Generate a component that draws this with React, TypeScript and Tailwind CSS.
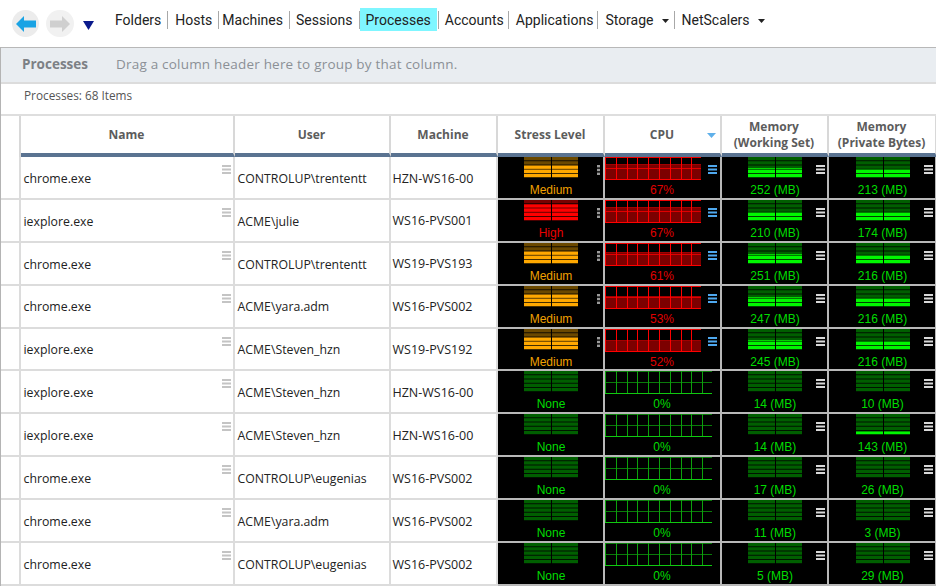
import React from 'react';

const NAV = [
  { label: 'Folders', cls: 'pl-[6px] pr-[6px]' },
  { label: 'Hosts', cls: 'pl-[7px] pr-[6px]' },
  { label: 'Machines', cls: 'pl-[3px] pr-[6px]' },
  { label: 'Sessions', cls: 'pl-[6px] pr-[6px]' },
  { label: 'Processes', active: true },
  { label: 'Accounts', cls: 'pl-[6px] pr-[4px]' },
  { label: 'Applications', cls: 'pl-[7px] pr-[4px]' },
  { label: 'Storage', caret: true, cls: 'pl-[7px] pr-[5px]' },
  { label: 'NetScalers', caret: true, cls: 'pl-[7px] pr-[6px]', last: true },
];

type Row = {
  name: string;
  user: string;
  machine: string;
  stress: 'Medium' | 'High' | 'None';
  cpu: number;
  ws: number;
  pb: number;
};

const ROWS: Row[] = [
  { name: 'chrome.exe', user: 'CONTROLUP\\trententt', machine: 'HZN-WS16-00', stress: 'Medium', cpu: 67, ws: 252, pb: 213 },
  { name: 'iexplore.exe', user: 'ACME\\julie', machine: 'WS16-PVS001', stress: 'High', cpu: 67, ws: 210, pb: 174 },
  { name: 'chrome.exe', user: 'CONTROLUP\\trententt', machine: 'WS19-PVS193', stress: 'Medium', cpu: 61, ws: 251, pb: 216 },
  { name: 'chrome.exe', user: 'ACME\\yara.adm', machine: 'WS16-PVS002', stress: 'Medium', cpu: 53, ws: 247, pb: 216 },
  { name: 'iexplore.exe', user: 'ACME\\Steven_hzn', machine: 'WS19-PVS192', stress: 'Medium', cpu: 52, ws: 245, pb: 216 },
  { name: 'iexplore.exe', user: 'ACME\\Steven_hzn', machine: 'HZN-WS16-00', stress: 'None', cpu: 0, ws: 14, pb: 10 },
  { name: 'iexplore.exe', user: 'ACME\\Steven_hzn', machine: 'HZN-WS16-00', stress: 'None', cpu: 0, ws: 14, pb: 143 },
  { name: 'chrome.exe', user: 'CONTROLUP\\eugenias', machine: 'WS16-PVS002', stress: 'None', cpu: 0, ws: 17, pb: 26 },
  { name: 'chrome.exe', user: 'ACME\\yara.adm', machine: 'WS16-PVS002', stress: 'None', cpu: 0, ws: 11, pb: 3 },
  { name: 'chrome.exe', user: 'CONTROLUP\\eugenias', machine: 'WS16-PVS002', stress: 'None', cpu: 0, ws: 5, pb: 29 },
];

const GRID = 'grid grid-cols-[20px_214px_156px_107px_107px_117px_107px_108px]';
const METER_TEXT = "text-[12px] leading-[14px] font-['Liberation_Sans',sans-serif]";

// five stacked bars split in two, lit from the bottom
function Meter({ lit, on, off }: { lit: number; on: string; off: string }) {
  const bars = [0, 1, 2, 3, 4];
  return (
    <svg width="54" height="21" className="block">
      {bars.map((i) => {
        const y = i * 4.2;
        const litTop = 21 - lit;
        const litH = Math.max(0, y + 3.4 - Math.max(y, litTop));
        return (
          <g key={i}>
            <rect x="0" y={y} width="54" height="3.4" fill={off} />
            {litH > 0 && <rect x="0" y={y + 3.4 - litH} width="54" height={litH} fill={on} />}
          </g>
        );
      })}
      <rect x="27" y="0" width="1" height="21" fill="#000" />
    </svg>
  );
}

function CpuGraph({ pct }: { pct: number }) {
  const hot = pct > 0;
  const width = hot ? 96 : 107;
  const line = hot ? '#ff0000' : '#0ca00c';
  const mid = hot ? '#e00000' : '#0a7a0a';
  const base = hot ? '#ff0000' : '#10c810';
  const fillH = Math.round((pct * 22) / 100);
  const cols = [0, 1, 2, 3, 4, 5, 6, 7, 8, 9];
  return (
    <svg width={width} height="23" className="block" shapeRendering="crispEdges">
      {hot && <rect x="0" y={22 - fillH} width={width} height={fillH} fill="#7c0000" />}
      <rect x="0" y="0" width={width} height="1" fill={hot ? '#f00000' : '#0a7a0a'} />
      <rect x="0" y="11" width={width} height="1" fill={mid} />
      {hot && <rect x="0" y={22 - fillH} width={width} height="1" fill="#a00000" />}
      {cols.map((i) =>
        i * 10.8 < width ? <rect key={i} x={Math.round(i * 10.8)} y="0" width="1" height="22" fill={line} /> : null,
      )}
      <rect x="0" y="22" width={width} height="1" fill={base} />
    </svg>
  );
}

function LinesIcon({ color, className }: { color: string; className: string }) {
  return (
    <svg width="9" height="9" className={className}>
      <rect x="0" y="0" width="9" height="2" fill={color} />
      <rect x="0" y="3.500" width="9" height="2" fill={color} />
      <rect x="0" y="7" width="9" height="2" fill={color} />
    </svg>
  );
}

function Dots() {
  return (
    <svg width="3" height="10" className="absolute top-[8px] right-[3px]">
      <rect x="0" y="0" width="3" height="2.400" fill="#9a9a9a" />
      <rect x="0" y="3.800" width="3" height="2.400" fill="#9a9a9a" />
      <rect x="0" y="7.600" width="3" height="2.400" fill="#9a9a9a" />
    </svg>
  );
}

function BlackCell({ children }: { children: React.ReactNode }) {
  return (
    <div className="relative flex flex-col items-center pl-[2px] bg-black border-r-2 border-b-2 border-[#b8b8b8] overflow-hidden">
      {children}
    </div>
  );
}

function MemoryCell({ value }: { value: number }) {
  const lit = value >= 245 ? 10 : value >= 170 ? 8.4 : value >= 100 ? 3.4 : 0;
  return (
    <BlackCell>
      <Meter lit={lit} on="#00f800" off="#005f00" />
      <LinesIcon color="#d8d8d8" className="absolute top-[8px] right-[2px]" />
      <span className={`mt-[5px] text-[#00dc00] ${METER_TEXT}`}>{value} (MB)</span>
    </BlackCell>
  );
}

const STRESS = {
  Medium: { lit: 12.4, on: '#ffa800', off: '#6a4800', text: 'text-[#f0a000]' },
  High: { lit: 16.6, on: '#ff0000', off: '#780000', text: 'text-[#e80000]' },
  None: { lit: 0, on: '#00f800', off: '#005f00', text: 'text-[#00dc00]' },
};

function Caret() {
  return (
    <svg width="7" height="4" className="ml-[8px] mt-[1px]">
      <path d="M0 0h7L3.500 4z" fill="#222" />
    </svg>
  );
}

export default function App() {
  return (
    <div className="w-[936px] h-[586px] overflow-hidden bg-white font-['Open_Sans',sans-serif]">
      {/* Toolbar */}
      <div className="h-[47px] flex items-start">
        <div className="flex items-center ml-[12px] mt-[10px]">
          <div className="w-[27px] h-[27px] rounded-full bg-[#ececec] flex items-center justify-center">
            <svg width="20" height="16" viewBox="0 0 20 16">
              <path d="M0 8 8 0v4.500h12v7H8V16z" fill="#1aa3e4" />
            </svg>
          </div>
          <div className="ml-[7px] w-[28px] h-[27px] rounded-full bg-[#f1f1f1] flex items-center justify-center">
            <svg width="20" height="16" viewBox="0 0 20 16">
              <path d="M20 8 12 0v4.500H0v7h12V16z" fill="#cfcfcf" />
            </svg>
          </div>
          <svg width="11" height="9" className="ml-[9px] mt-[3px]">
            <path d="M0 0h11L5.500 9z" fill="#0a1a8c" />
          </svg>
        </div>
        <nav className="ml-[15px] mt-[8px] h-[23px] flex items-center text-[14px] text-[#222] font-['Roboto',sans-serif]">
          {NAV.map((item) => (
            <React.Fragment key={item.label}>
              {item.active ? (
                <span className="h-[18px] pr-[1px] flex items-center border-r border-[#a8a8a8]">
                  <span className="h-[23px] px-[6px] pt-[2px] bg-[#7ff6ff] flex items-center">{item.label}</span>
                </span>
              ) : (
                <span
                  className={`h-[18px] pt-[2px] flex items-center ${item.cls} ${item.last ? '' : 'border-r border-[#a8a8a8]'}`}
                >
                  {item.label}
                  {item.caret && <Caret />}
                </span>
              )}
            </React.Fragment>
          ))}
        </nav>
      </div>

      <div className="border-l-[1.500px] border-[#b4b4b4] h-[539px]">
        {/* Group-by band */}
        <div className="h-[37px] flex items-center bg-[#e9edf1] border-t-[1.500px] border-b-2 border-t-[#b8b8b8] border-b-[#dcdcdc] pl-[21px] pb-[1px] text-[13.500px] text-[#8b9096]">
          <span className="font-bold text-[#7c8085]">Processes</span>
          <span className="ml-[28px] tracking-[0.2px]">Drag a column header here to group by that column.</span>
        </div>

        <div className="h-[30px] pl-[23px] pt-[1px] text-[11.800px] leading-[20px] text-[#555]">Processes: 68 Items</div>

        {/* Header row */}
        <div className={`${GRID} -ml-[0.500px] h-[43px] border-t-2 border-[#dedede] text-[12px] leading-[16px] font-bold text-[#5c5c5c] text-center`}>
          {['', 'Name', 'User', 'Machine', 'Stress Level', 'CPU', 'Memory\n(Working Set)', 'Memory\n(Private Bytes)'].map((h, i) => (
            <div
              key={i}
              className={`relative flex items-center justify-center whitespace-pre-line border-r-2 border-[#d8d8d8] ${i === 0 ? '' : 'border-b-4 border-b-[#5a7391]'}`}
            >
              {h}
              {h === 'CPU' && (
                <svg width="9" height="5" className="absolute top-[17px] right-[4px]">
                  <path d="M0 0h9L4.500 5z" fill="#5fb0ea" />
                </svg>
              )}
            </div>
          ))}
        </div>

        {/* Rows */}
        {ROWS.map((r, i) => {
          const s = STRESS[r.stress];
          return (
            <div key={i} className={`${GRID} -ml-[0.500px] h-[42.900px] text-[12.300px] text-[#222]`}>
              <div className="border-r-2 border-b-2 border-[#dcdcdc]" />
              <div className="relative flex items-center pl-[3px] pt-[3px] border-r-2 border-b-2 border-[#dcdcdc]">
                {r.name}
                <LinesIcon color="#c4c4c4" className="absolute top-[8px] right-[2px]" />
              </div>
              <div className="flex items-center pl-[3px] pt-[3px] border-r-2 border-b-2 border-[#dcdcdc]">{r.user}</div>
              <div className="flex items-center pl-[2px] pt-[3px] border-r-2 border-b-2 border-[#dcdcdc] text-[12.500px]">{r.machine}</div>
              <BlackCell>
                <Meter lit={s.lit} on={s.on} off={s.off} />
                {r.cpu > 0 && <Dots />}
                <span className={`mt-[5px] ${METER_TEXT} ${s.text}`}>{r.stress}</span>
              </BlackCell>
              <BlackCell>
                <div className="self-start -ml-[2px]">
                  <CpuGraph pct={r.cpu} />
                </div>
                {r.cpu > 0 && <LinesIcon color="#4fa8ee" className="absolute top-[8px] right-[3px]" />}
                <span className={`mt-[3px] -ml-[2px] ${METER_TEXT} ${r.cpu > 0 ? 'text-[#e00000]' : 'text-[#00dc00]'}`}>
                  {r.cpu}%
                </span>
              </BlackCell>
              <MemoryCell value={r.ws} />
              <MemoryCell value={r.pb} />
            </div>
          );
        })}
      </div>
    </div>
  );
}
